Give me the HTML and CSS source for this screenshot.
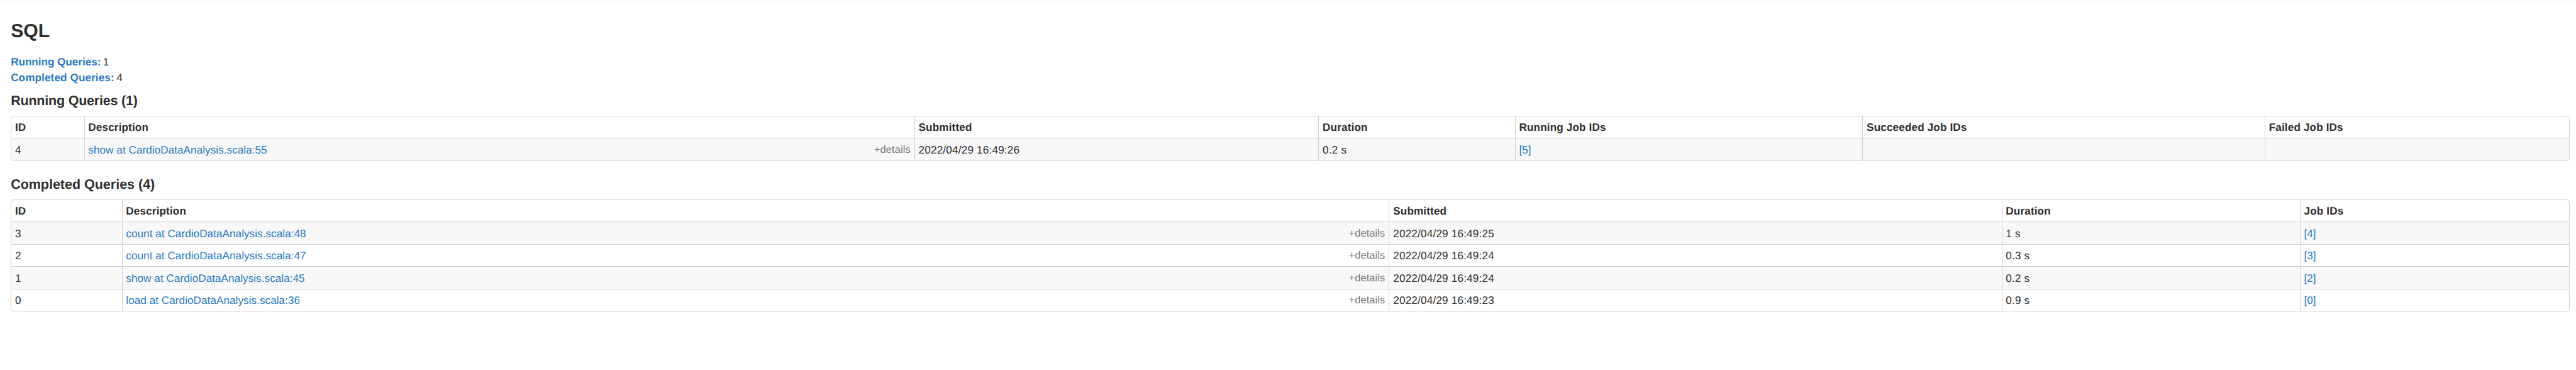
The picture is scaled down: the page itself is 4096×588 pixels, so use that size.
FILE: index.html
```html
<!DOCTYPE html>
<html lang="en">
<head>
<meta charset="utf-8">
<title>SQL</title>
<link rel="stylesheet" href="styles.css">
</head>
<body>
<main class="page">
<h3 class="page-title">SQL</h3>
<ul class="summary">
<li><a class="tight" href="#running"><strong>Running Queries:</strong></a> <span class="count">1</span></li>
<li><a class="wide" href="#completed"><strong>Completed Queries:</strong></a> <span class="count">4</span></li>
</ul>
<h4 class="section-title section-running" id="running">Running Queries (1)</h4>
<table class="queries">
<colgroup><col class="r-id"><col class="r-desc"><col class="r-sub"><col class="r-dur"><col class="r-run"><col class="r-succ"><col class="r-fail"></colgroup>
<thead><tr><th>ID</th><th>Description</th><th>Submitted</th><th>Duration</th><th>Running Job IDs</th><th>Succeeded Job IDs</th><th>Failed Job IDs</th></tr></thead>
<tbody>
<tr><td>4</td><td><div class="desc"><a href="#q4">show at CardioDataAnalysis.scala:55</a><span class="details">+details</span></div></td><td class="num">2022/04/29 16:49:26</td><td class="num">0.2 s</td><td><a href="#j5">[5]</a></td><td></td><td></td></tr>
</tbody>
</table>
<h4 class="section-title section-completed" id="completed">Completed Queries (4)</h4>
<table class="queries">
<colgroup><col class="c-id"><col class="c-desc"><col class="c-sub"><col class="c-dur"><col class="c-job"></colgroup>
<thead><tr><th>ID</th><th>Description</th><th>Submitted</th><th>Duration</th><th>Job IDs</th></tr></thead>
<tbody>
<tr><td>3</td><td><div class="desc"><a href="#q3">count at CardioDataAnalysis.scala:48</a><span class="details">+details</span></div></td><td class="num">2022/04/29 16:49:25</td><td class="num">1 s</td><td><a href="#j4">[4]</a></td></tr>
<tr><td>2</td><td><div class="desc"><a href="#q2">count at CardioDataAnalysis.scala:47</a><span class="details">+details</span></div></td><td class="num">2022/04/29 16:49:24</td><td class="num">0.3 s</td><td><a href="#j3">[3]</a></td></tr>
<tr><td>1</td><td><div class="desc"><a href="#q1">show at CardioDataAnalysis.scala:45</a><span class="details">+details</span></div></td><td class="num">2022/04/29 16:49:24</td><td class="num">0.2 s</td><td><a href="#j2">[2]</a></td></tr>
<tr><td>0</td><td><div class="desc"><a href="#q0">load at CardioDataAnalysis.scala:36</a><span class="details">+details</span></div></td><td class="num">2022/04/29 16:49:23</td><td class="num">0.9 s</td><td><a href="#j0">[0]</a></td></tr>
</tbody>
</table>
</main>
</body>
</html>
```
FILE: styles.css
```css
* { box-sizing: border-box; }
body {
  margin: 0;
  height: 588px;
  overflow: hidden;
  background: linear-gradient(#f8f8f8, #fff 7px);
  color: #2e2e2e;
  font: 17.15px/24.5px "Liberation Sans", Arial, sans-serif;
  text-rendering: geometricPrecision;
}
.page { padding: 32px 11px 0 17.15px; }
a { color: #2a7ac2; text-decoration: none; }
.page-title { margin: 0; font-size: 30.2px; line-height: 36px; }
.summary { list-style: none; margin: 18.1px 0 0; padding: 0; }
.tight { letter-spacing: -0.04px; }
.wide { letter-spacing: 0.1px; }
.count { margin-left: -1.4px; }
.section-title { font-size: 21.44px; line-height: 24.5px; }
.section-running { margin: 12.7px 0 0; letter-spacing: -0.17px; }
.section-completed { margin: 25.1px 0 0; letter-spacing: 0.02px; }
.queries {
  table-layout: fixed;
  width: 4067.8px;
  margin-top: 11.5px;
  border: 1px solid #d2d2d2;
  border-left: 0;
  border-radius: 4.9px;
  border-collapse: separate;
  border-spacing: 0;
}
th, td {
  padding: 0.8px 6px 0 5.8px;
  border-left: 1px solid #d2d2d2;
  text-align: left;
  line-height: 24.5px;
}
th { height: 34.53px; letter-spacing: 0.13px; }
td { height: 35.53px; border-top: 1px solid #d2d2d2; }
.num { letter-spacing: 0.18px; }
tbody tr:nth-child(odd) td { background: #f8f8f8; }
th:first-child { border-top-left-radius: 4.9px; }
tr:last-child td:first-child { border-bottom-left-radius: 4.9px; }
tr:last-child td:last-child { border-bottom-right-radius: 4.9px; }
.desc { display: flex; justify-content: space-between; letter-spacing: 0.04px; }
.details { color: #777; font-size: 16.5px; letter-spacing: 0.08px; }
.r-id { width: 116.4px; }
.r-desc { width: 1320.2px; }
.r-sub { width: 642.6px; }
.r-dur { width: 312.4px; }
.r-run { width: 552.6px; }
.r-succ { width: 639.6px; }
.r-fail { width: 484px; }
.c-id { width: 176.4px; }
.c-desc { width: 2014.9px; }
.c-sub { width: 974.1px; }
.c-dur { width: 474.2px; }
.c-job { width: 428.2px; }
```
